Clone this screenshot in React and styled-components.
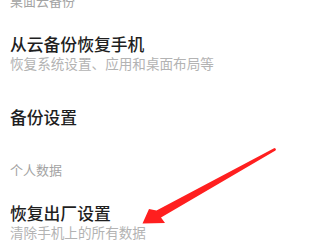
import styled, { createGlobalStyle } from "styled-components";

const GlobalStyle = createGlobalStyle`
  html, body {
    margin: 0;
    padding: 0;
    background: #ffffff;
  }
  body {
    font-family: "Noto Sans CJK SC", "Noto Sans", sans-serif;
    overflow: hidden;
  }
`;

const Screen = styled.div`
  position: relative;
  width: 320px;
  height: 240px;
  overflow: hidden;
  background: #ffffff;
`;

const List = styled.div`
  display: flex;
  flex-direction: column;
  margin-top: -24.5px;
  padding-left: 10px;
`;

const SectionHeader = styled.div`
  font-size: 13px;
  line-height: 20px;
  color: #a3a3a3;
  padding: 15.5px 0 7px;
`;

const Item = styled.div`
  display: flex;
  flex-direction: column;
  padding: 16px 0 17.5px;
`;

const Title = styled.div`
  font-size: 16.8px;
  line-height: 20px;
  font-weight: 500;
  color: #1f1f1f;
`;

const Subtitle = styled.div`
  font-size: 13.6px;
  line-height: 19px;
  color: #b3b3b3;
`;

const Arrow = styled.svg`
  position: absolute;
  left: 0;
  top: 0;
  pointer-events: none;
`;

const sections = [
  {
    header: "桌面云备份",
    items: [
      { title: "从云备份恢复手机", sub: "恢复系统设置、应用和桌面布局等" },
      { title: "备份设置" },
    ],
  },
  {
    header: "个人数据",
    items: [{ title: "恢复出厂设置", sub: "清除手机上的所有数据" }],
  },
];

export default function App() {
  return (
    <Screen>
      <GlobalStyle />
      <List>
        {sections.map((s) => (
          <div key={s.header}>
            <SectionHeader>{s.header}</SectionHeader>
            {s.items.map((it) => (
              <Item key={it.title}>
                <Title>{it.title}</Title>
                {it.sub && <Subtitle>{it.sub}</Subtitle>}
              </Item>
            ))}
          </div>
        ))}
      </List>
      <Arrow width="320" height="240" viewBox="0 0 320 240">
        <polygon
          fill="#ff1f1f"
          points="142.5,223.5 149,209 156.5,210.5 274.5,148 276,149 275.5,150.4 161,217.5 165,223"
        />
      </Arrow>
    </Screen>
  );
}
